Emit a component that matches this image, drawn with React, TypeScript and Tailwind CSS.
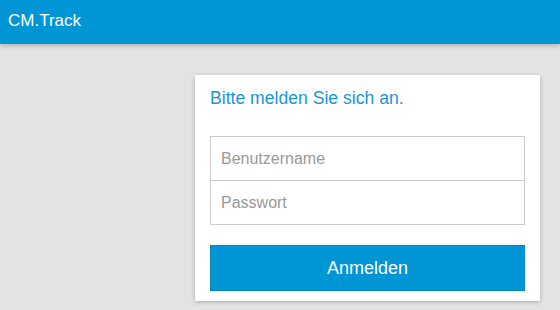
export default function App() {
  return (
    <div className="min-h-[310px] w-[560px] bg-[#e3e3e3] font-['Liberation_Sans',Arial,sans-serif]">
      <header className="h-[44px] bg-[#0096d6] flex items-center px-[8px] pb-[2px] shadow-[0_2px_4px_rgba(0,0,0,0.2)]">
        <span className="text-white text-[17px]">CM.Track</span>
      </header>

      <div className="ml-[195px] mt-[31px] w-[345px] bg-white px-[15px] pt-[13px] pb-[10px] shadow-[0_1px_4px_rgba(0,0,0,0.25)]">
        <h1 className="text-[17.6px] leading-[20px] text-[#1a96d6]">Bitte melden Sie sich an.</h1>

        <form className="mt-[28px]">
          <input
            name="username"
            placeholder="Benutzername"
            className="block w-full h-[45px] border border-[#cccccc] px-[10px] text-[16px] text-gray-700 placeholder:text-[#999] outline-none"
          />
          <input
            name="password"
            type="password"
            placeholder="Passwort"
            className="block w-full h-[44px] border border-t-0 border-[#cccccc] px-[10px] text-[16px] text-gray-700 placeholder:text-[#999] outline-none"
          />
          <button
            type="submit"
            className="mt-[20px] block w-full h-[46px] bg-[#0096d6] border border-[#0088c6] text-white text-[18px]"
          >
            Anmelden
          </button>
        </form>
      </div>
    </div>
  );
}
